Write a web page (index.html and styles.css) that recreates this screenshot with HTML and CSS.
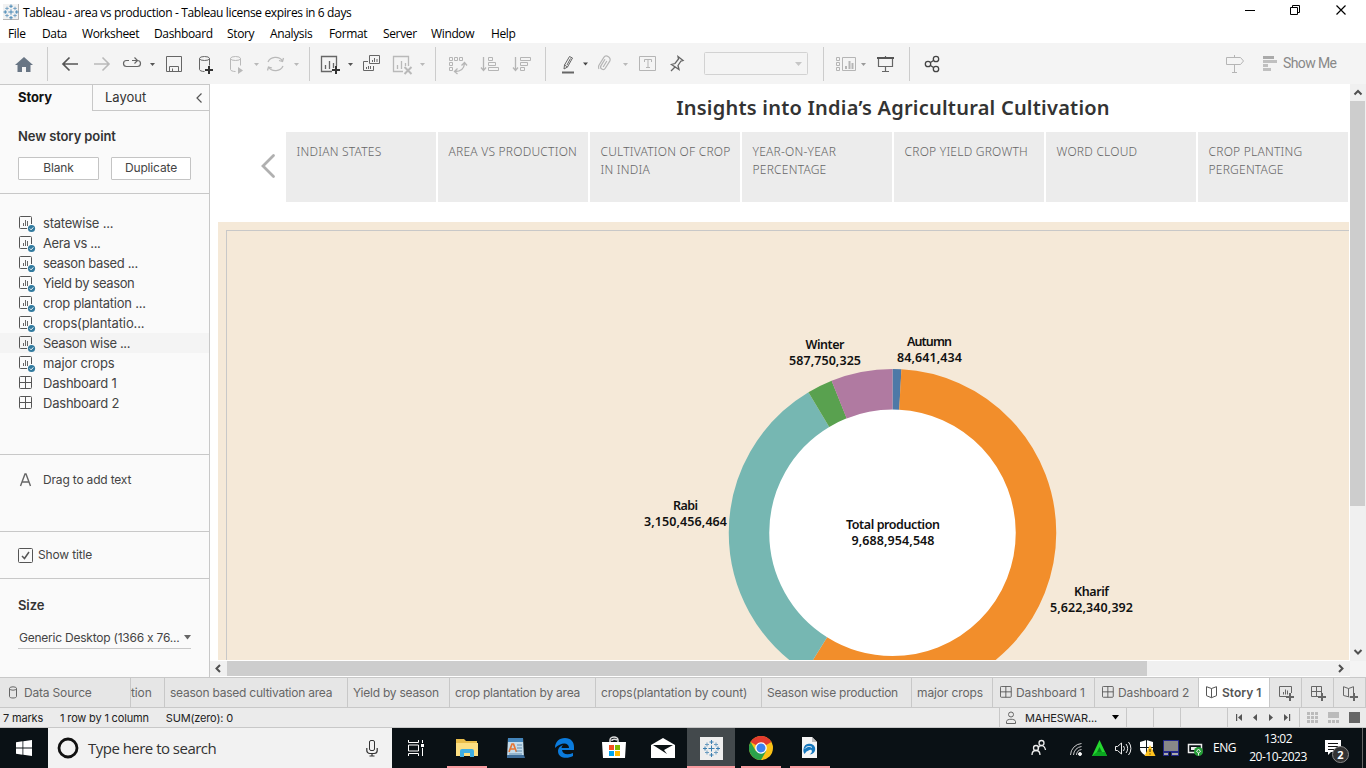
FILE: index.html
```html
<!DOCTYPE html>
<html lang="en">
<head>
<meta charset="utf-8">
<title>Tableau - area vs production</title>
<link rel="stylesheet" href="styles.css">
</head>
<body>
<svg class="defs" width="0" height="0">
  <defs>
    <g id="sheet" fill="none" stroke="#555">
      <path d="M12.500 8V1.500a1 1 0 0 0-1-1H1.500a1 1 0 0 0-1 1V11.500a1 1 0 0 0 1 1H8"/>
      <path d="M4.500 10V7M6.500 10V4M8.500 10V5" stroke="#666"/>
      <circle cx="12.500" cy="12.500" r="3.600" fill="#317a9e" stroke="none"/>
      <path d="M10.800 12.500l1.300 1.300 2.200-2.400" stroke="#fff"/>
    </g>
    <g id="dash" fill="none" stroke="#555">
      <rect x=".5" y=".5" width="12" height="12" rx="1"/><path d="M6.500 .5v12M.5 6.500h12"/>
    </g>
    <g id="book" fill="none" stroke="#555">
      <path d="M5.500 2.500L.5 .7v9l5 2 5-2v-9zM5.500 2.500v9.200"/>
    </g>
    <g id="caret"><path d="M0 0h5L2.500 3z"/></g>
    <g id="plus"><path d="M4 0v8M0 4h8" fill="none" stroke-width="2"/></g>
    <g id="logo" stroke="#3a7fb0" fill="none">
      <path d="M9 6v6M6 9h6"/>
      <path d="M9 .5v4M7 2.500h4M9 13.500v4M7 15.500h4M.5 9h4M2.500 7v4M13.500 9h4M15.500 7v4"/>
      <path d="M4.500 3v4M2.500 5h4M13.500 3v4M11.500 5h4M4.500 11v4M2.500 13h4M13.500 11v4M11.500 13h4" stroke="#6b9cc0"/>
    </g>
  </defs>
</svg>
<div class="window">
  <header class="titlebar">
    <svg class="app-icon" width="16" height="16" viewBox="0 0 18 18"><rect width="18" height="18" fill="#f2f2f2"/><path d="M17.500 0v17.500H0" fill="none" stroke="#aaa"/><use href="#logo"/></svg>
    <span class="app-title">Tableau - area vs production - Tableau license expires in 6 days</span>
    <svg class="win-controls" width="130" height="24" viewBox="1236 0 130 24" fill="none" stroke="#000">
      <path d="M1245 10.500h10"/><path d="M1290.500 7.500h7v7h-7zM1292.500 7.500v-2h7v7h-2"/><path d="M1336.500 5.500l9 9M1345.500 5.500l-9 9" stroke-width="1.200"/>
    </svg>
  </header>
  <nav class="menu"><span>File</span><span>Data</span><span>Worksheet</span><span>Dashboard</span><span>Story</span><span>Analysis</span><span>Format</span><span>Server</span><span>Window</span><span>Help</span></nav>

  <div class="toolbar">
    <svg class="tool-group" width="48" height="34" viewBox="0 47 48 34">
      <path d="M24 57l9 8h-2.500v7H26v-5h-4v5h-4.500v-7H15z" fill="#687584"/>
    </svg>
    <svg class="tool-group" width="262" height="34" viewBox="48 47 262 34" fill="none" stroke="#666">
      <path d="M78 64H63M69.500 57.500L63 64l6.500 6.500" stroke-width="1.700" stroke="#555"/>
      <path d="M94 64h15M102.500 57.500L109 64l-6.500 6.500" stroke-width="1.600" stroke="#b9b9b9"/>
      <path d="M129 60.500h-2.500a3 3 0 0 0 0 6h11a3 3 0 0 0 3-3c0-2-1-3-3-3H132M134.500 57.500l3 3-3 3" stroke-width="1.200"/>
      <use href="#caret" x="150" y="63" fill="#555" stroke="none"/>
      <path d="M166.500 56.500h15v15h-15zM169.500 71.500v-5h9v5M172.500 71v-2.500"/>
      <path d="M199.500 58.500v11c0 1 2 2 5 2M209.500 58.500v7"/><ellipse cx="204.500" cy="58.500" rx="5" ry="2"/>
      <use href="#plus" x="205" y="66" stroke="#333"/>
      <g stroke="#b9b9b9"><path d="M230.500 58.500v11c0 1 2 2 5 2M240.500 58.500v7"/><ellipse cx="235.500" cy="58.500" rx="5" ry="2"/><path d="M238 67l5 3.500-5 3.500z" fill="#b9b9b9" stroke="none"/>
      <path d="M268 62a8 7 0 0 1 14.500-1M283 66a8 7 0 0 1-14.500 1M283.500 58l-1 3.500-3.500-1M267.500 70.500l1-3.500 3.500 1" stroke-width="1.300"/></g>
      <g fill="#b9b9b9" stroke="none"><use href="#caret" x="254" y="63"/><use href="#caret" x="294" y="63"/></g>
    </svg>
    <svg class="tool-group" width="126" height="34" viewBox="310 47 126 34" fill="none" stroke="#666">
      <path d="M336.500 66v-9.500h-15v15H332M325.500 69v-4M329.500 69v-8M333.500 68v-5" stroke-width="1.300"/>
      <use href="#plus" x="332" y="66" stroke="#333"/>
      <use href="#caret" x="348" y="63" fill="#555" stroke="none"/>
      <path d="M369.500 55.500h10v8h-10zM372.500 62v-2M374.500 62v-4M377 62v-3M368 61.500h-4.500v9h10V66M366.500 69v-2M368.500 69v-3M370.500 69v-3"/>
      <g stroke="#b9b9b9"><path d="M408.500 66v-9.500h-15v15H403M397.500 69v-4M401.500 69v-8M405.500 66v-3" stroke-width="1.300"/><path d="M404.500 67l7 7M411.500 67l-7 7" stroke-width="2"/></g>
      <use href="#caret" x="420" y="63" fill="#b9b9b9" stroke="none"/>
    </svg>
    <svg class="tool-group" width="110" height="34" viewBox="436 47 110 34" fill="none" stroke="#b5b5b5">
      <path d="M449.500 57.500h3v3h-3zM454.500 57.500h3v3h-3zM459.500 57.500h3v3h-3zM449.500 62.500h3v3h-3zM449.500 67.500h3v3h-3z"/>
      <path d="M455 71.500c5 0 9-2 9.500-8M461.500 65.500l3-3 2.500 3M457.500 68.500l-3 3 3 2.500" stroke-width="1.300"/>
      <path d="M483.500 57v13M481 67.500l2.500 3 2.500-3" stroke-width="1.300"/><path d="M488.500 57.500h4v3h-4zM488.500 62.500h7v3h-7zM488.500 67.500h10v3h-10z"/>
      <path d="M515.500 57v13M513 67.500l2.500 3 2.500-3" stroke-width="1.300"/><path d="M520.500 57.500h10v3h-10zM520.500 62.500h7v3h-7zM520.500 67.500h4v3h-4z"/>
    </svg>
    <svg class="tool-group" width="278" height="34" viewBox="546 47 278 34" fill="none" stroke="#666">
      <path d="M569.500 56.500l3 1.500-5 9-3.500 2 .5-4zM570.500 58.500l-3.500 6.500M564.500 65l3 2"/><path d="M562 72.500h12" stroke-width="2"/>
      <use href="#caret" x="583" y="62.500" fill="#444" stroke="none"/>
      <g transform="rotate(32 605 64)"><path d="M602.500 60v7.500a2.500 2.500 0 0 0 5 0V59a3.500 3 0 0 0-7 0v9.500a4.500 4.500 0 0 0 2 3M605 60.500v7" stroke="#b5b5b5" stroke-width="1.200"/></g>
      <use href="#caret" x="623" y="63" fill="#b9b9b9" stroke="none"/>
      <path d="M639.500 56.500h16v14h-16zM644.500 62v-2.500h7V62M648 60v7.500M646 67.500h4" stroke="#b5b5b5"/>
      <path d="M678 56.500l5 4-2 .5-3 4.500 1 4-7.500-5 3.500-1 3.500-4.500zM675.500 66.500L671 71" stroke-width="1.300"/>
      <rect x="704.500" y="52.500" width="103" height="22" rx="1" stroke="#d2d2d2"/><path d="M795 62h7l-3.500 4z" fill="#c6c6c6" stroke="none"/>
    </svg>
    <svg class="tool-group" width="86" height="34" viewBox="824 47 86 34" fill="none" stroke="#b5b5b5">
      <path d="M836.500 57.500h3v3h-3zM836.500 62.500h3v3h-3zM836.500 67.500h3v3h-3zM842.500 57.500h13v13h-13z"/><path d="M846 69v-3M849.500 69v-8M852.500 69v-6" stroke-width="2"/>
      <use href="#caret" x="861" y="63" fill="#999" stroke="none"/>
      <path d="M877 58h17" stroke="#555" stroke-width="2"/><path d="M878.500 59v7.500h14V59M885.500 56v1M885.500 67v4M882 71.500h7" stroke="#666" stroke-width="1.200"/>
    </svg>
    <svg class="tool-group" width="456" height="34" viewBox="910 47 456 34" fill="none" stroke="#444">
      <g stroke-width="1.300"><circle cx="928" cy="64" r="2.700"/><circle cx="936" cy="59" r="2.700"/><circle cx="936" cy="69" r="2.700"/><path d="M930.500 62.500l3-2M930.500 65.500l3 2"/></g>
      <path d="M1226.500 57.500h14l3 3.500-3 3.500h-14zM1234.500 55v2M1234.500 65v7M1232 72.500h5" stroke="#b5b5b5"/>
      <path d="M1263 57.500h11" stroke="#aaa" stroke-width="3"/><path d="M1263 61.500h14M1263 65.500h5M1263 69.500h8" stroke="#c0c0c0" stroke-width="3"/>
      <text class="showme" x="1283" y="68" textLength="54">Show Me</text>
    </svg>
  </div>

  <main class="workspace">
    <aside class="sidebar">
      <div class="side-tabs"><b>Story</b><span class="layout-tab">Layout<svg width="8" height="12" viewBox="0 0 8 12"><path d="M6.500 1.500L2 6l4.500 4.500" fill="none" stroke="#555" stroke-width="1.200"/></svg></span></div>
      <section class="new-point">
        <h3>New story point</h3>
        <div class="buttons"><span class="btn">Blank</span><span class="btn">Duplicate</span></div>
      </section>
      <ul class="sheets">
        <li><svg width="17" height="17"><use href="#sheet"/></svg><span>statewise ...</span></li>
        <li><svg width="17" height="17"><use href="#sheet"/></svg><span class="wide">Aera vs ...</span></li>
        <li><svg width="17" height="17"><use href="#sheet"/></svg><span class="wide">season based ...</span></li>
        <li><svg width="17" height="17"><use href="#sheet"/></svg><span class="wide">Yield by season</span></li>
        <li><svg width="17" height="17"><use href="#sheet"/></svg><span>crop plantation ...</span></li>
        <li><svg width="17" height="17"><use href="#sheet"/></svg><span class="narrow">crops(plantatio...</span></li>
        <li class="hover"><svg width="17" height="17"><use href="#sheet"/></svg><span class="wide">Season wise ...</span></li>
        <li><svg width="17" height="17"><use href="#sheet"/></svg><span class="narrow">major crops</span></li>
        <li><svg width="17" height="17"><use href="#dash"/></svg><span>Dashboard 1</span></li>
        <li><svg width="17" height="17"><use href="#dash"/></svg><span>Dashboard 2</span></li>
      </ul>
      <div class="drag"><svg width="25" height="16" viewBox="0 0 25 16"><path d="M2.500 14L7 2h1l4.500 12M4.500 10h6" fill="none" stroke="#666" stroke-width="1.400"/></svg>Drag to add text</div>
      <div class="show-title"><svg width="15" height="15" viewBox="0 0 15 15" fill="none"><rect x=".5" y=".5" width="14" height="14" rx="1" stroke="#555"/><path d="M4 8l2.500 2.500L11 4" stroke="#555" stroke-width="1.500"/></svg><span>Show title</span></div>
      <div class="size"><h3>Size</h3><div class="select"><span>Generic Desktop (1366 x 76...</span><svg width="7" height="5"><path d="M0 0h7L3.500 4.500z" fill="#666"/></svg></div></div>
    </aside>

    <div class="view">
      <div class="canvas">
        <h1>Insights into India’s Agricultural Cultivation</h1>
        <div class="points">
          <svg class="prev" width="16" height="26" viewBox="0 0 16 26"><path d="M13.500 2.500L3 13l10.500 10.500" fill="none" stroke="#b0b0b0" stroke-width="2.800" stroke-linecap="round"/></svg>
          <div class="point">INDIAN STATES</div><div class="point">AREA VS PRODUCTION</div><div class="point">CULTIVATION OF CROP<br>IN INDIA</div><div class="point">YEAR-ON-YEAR<br>PERCENTAGE</div><div class="point">CROP YIELD GROWTH</div><div class="point">WORD CLOUD</div><div class="point">CROP PLANTING<br>PERGENTAGE</div>
        </div>
        <div class="dashboard">
          <div class="frame">
            <svg class="donut" width="1122" height="429" viewBox="227 231 1122 429">
              <circle cx="892.500" cy="532.800" r="124" fill="#fff"/>
              <g class="ring" transform="rotate(-90 892.500 532.800)">
                <circle class="autumn" cx="892.500" cy="532.800" r="143.500" pathLength="100"/>
                <circle class="kharif" cx="892.500" cy="532.800" r="143.500" pathLength="100"/>
                <circle class="rabi" cx="892.500" cy="532.800" r="143.500" pathLength="100"/>
                <circle class="summer" cx="892.500" cy="532.800" r="143.500" pathLength="100"/>
                <circle class="winter" cx="892.500" cy="532.800" r="143.500" pathLength="100"/>
              </g>
              <g class="labels">
                <text x="825" y="349" textLength="39">Winter</text><text x="825" y="365" textLength="72">587,750,325</text>
                <text x="929.500" y="346" textLength="45">Autumn</text><text x="929.500" y="362" textLength="65">84,641,434</text>
                <text x="685.500" y="510" textLength="25">Rabi</text><text x="685.500" y="526" textLength="83">3,150,456,464</text>
                <text x="893" y="529" textLength="94">Total production</text><text x="893" y="545" textLength="83">9,688,954,548</text>
                <text x="1091.500" y="596" textLength="35">Kharif</text><text x="1091.500" y="612" textLength="83">5,622,340,392</text>
              </g>
            </svg>
          </div>
        </div>
      </div>
      <div class="vscroll"><svg width="16" height="17"><path d="M4.500 10.500L8 7l3.500 3.500" fill="none" stroke="#505050" stroke-width="2"/></svg><i></i><svg width="16" height="17"><path d="M4.500 7L8 10.500 11.500 7" fill="none" stroke="#505050" stroke-width="2"/></svg></div>
      <div class="hscroll"><svg width="17" height="15"><path d="M10 4L6.500 7.500 10 11" fill="none" stroke="#505050" stroke-width="2"/></svg><i></i><svg width="17" height="15"><path d="M7 4l3.500 3.500L7 11" fill="none" stroke="#505050" stroke-width="2"/></svg></div>
      <div class="corner"></div>
    </div>
  </main>

  <div class="tabs">
    <div class="source"><svg width="15" height="13" fill="none" stroke="#666"><path d="M.5 2.500v8c0 2 7 2 7 0v-8"/><ellipse cx="4" cy="2.500" rx="3.500" ry="1.700"/></svg>Data Source</div>
    <div class="cut">tion</div><div class="tight">season based cultivation area</div><div class="tight">Yield by season</div><div class="tight">crop plantation by area</div><div>crops(plantation by count)</div><div class="tight">Season wise production</div><div>major crops</div>
    <div class="dash"><svg width="16" height="13"><use href="#dash" transform="scale(.9)"/></svg>Dashboard 1</div>
    <div class="dash"><svg width="16" height="13"><use href="#dash" transform="scale(.9)"/></svg>Dashboard 2</div>
    <div class="active"><svg width="16" height="13"><use href="#book"/></svg>Story 1</div>
    <div class="add"><svg width="16" height="16" fill="none" stroke="#666"><path d="M8 10.500H.5v-10h12V7M4.500 8.500V6M6.500 8.500v-5M8.500 8.500v-4"/><use href="#plus" x="7" y="7"/></svg></div>
    <div class="add"><svg width="16" height="16" fill="none" stroke="#666"><path d="M8 10.500H.5v-10h10V7M5.500 .5v10M.5 5.500h10"/><use href="#plus" x="7" y="7"/></svg></div>
    <div class="add"><svg width="16" height="16" fill="none" stroke="#666"><path d="M6.500 11L.5 9.500V.7l5 1.800 5-1.800V7M5.500 2.500v8.500"/><use href="#plus" x="7" y="7"/></svg></div>
  </div>

  <footer class="status">
    <div class="marks"><span>7 marks</span><span>1 row by 1 column</span><span>SUM(zero): 0</span></div>
    <div class="user"><svg width="10" height="14" fill="none" stroke="#666"><circle cx="5" cy="3.500" r="2.500"/><path d="M.5 12.500V10.500C.5 7.500 9.500 7.500 9.500 10.500v2z"/></svg><span>MAHESWAR...</span><svg width="7" height="5"><path d="M0 0h7L3.500 4.500z"/></svg></div>
    <div></div><div></div><div></div>
    <div class="pager"><svg width="71" height="19" viewBox="1228 708 71 19" fill="#555"><path d="M1236 714h1.200v7H1236zM1242 714v7l-4-3.500zM1257 714v7l-4-3.500zM1269 714v7l4-3.500zM1284 714v7l4-3.500zM1289 714h1.200v7H1289z"/></svg></div>
    <div class="modes"><svg width="66" height="19" viewBox="1300 708 66 19" fill="#bbb"><path d="M1307 712h3v3h-3zM1311 712h3v3h-3zM1315 712h3v3h-3zM1307 716h3v3h-3zM1311 716h3v3h-3zM1315 716h3v3h-3zM1307 720h3v3h-3zM1311 720h3v3h-3zM1315 720h3v3h-3zM1328 712h11v6h-11zM1328 720h3v3h-3zM1332 720h3v3h-3zM1336 720h3v3h-3z"/><path d="M1349 712h11v11h-11z" fill="#666"/></svg></div>
  </footer>

  <div class="taskbar">
    <div class="start"><svg width="16" height="16" fill="#fff"><path d="M0 2.300L6.500 1.300V7.500H0zM7.300 1.200L16 0v7.500H7.300zM0 8.400h6.500v6.300L0 13.700zM7.300 8.400H16V16l-8.700-1.200z"/></svg></div>
    <div class="search"><svg width="22" height="22"><circle cx="11" cy="11" r="9" fill="none" stroke="#111" stroke-width="2.800"/></svg><span>Type here to search</span><svg width="12" height="17" fill="none" stroke="#333"><rect x="3.500" y=".5" width="5" height="10" rx="1.500"/><path d="M.8 8v2.500a3 3 0 0 0 3 3h4.400a3 3 0 0 0 3-3V8M6 13.500V16M3.500 16h5" stroke-width="1.200"/></svg></div>
    <div class="apps">
      <div class="app task-view"><svg width="18" height="16" fill="none" stroke="#fff"><path d="M1.500 0v2.500h10V0M1.500 16v-2.500h10V16M1.500 5h10v6h-10zM15.500 0v3M15.500 8v8"/><path d="M14 4h3v3h-3z" fill="#fff" stroke="none"/></svg></div>
      <div class="app open"><svg width="22" height="20"><path d="M0 1h8l2 2h11v15H0z" fill="#e9bd4b"/><path d="M0 5h22v13H0z" fill="#fddf82"/><path d="M4 19v-6q0-2 2-2h10q2 0 2 2v6h-4v-4H8v4z" fill="#3faee3"/></svg></div>
      <div class="app"><svg width="20" height="22"><path d="M2 1h15l1 20H1z" fill="#c4dceb"/><path d="M2 1h15v4H2z" fill="#4485bb"/><path d="M1 18h17l1 3H1z" fill="#3d6c98"/><path d="M3 15l3-8h1.500l3 8M4.500 12h4" fill="none" stroke="#e67635" stroke-width="1.700"/><path d="M11 8h5M11 11h5M10 14h6M3 17h13" stroke="#618caf"/></svg></div>
      <div class="app"><svg width="22" height="22"><path d="M1 11C1 5 5 1 11 1s9 4 9 9v3H8c1 5 6 5 11 3v3c-5 3-15 3-15-5 0-3 2-5 5-6-1 1-1.500 2-1.500 3H15c0-6-8-6-14 0z" fill="#0b7bdc"/></svg></div>
      <div class="app"><svg width="24" height="24"><path d="M8 6V4a4 3 0 0 1 8 0v2M10 5V4a4 3 0 0 1 5 0" fill="none" stroke="#ddd" stroke-width="1.500"/><path d="M0 6h24l-1 16H1z" fill="#fff"/><path d="M7 9h5v5H7z" fill="#f25022"/><path d="M13 9h5v5h-5z" fill="#7fba00"/><path d="M7 15h5v5H7z" fill="#00a4ef"/><path d="M13 15h5v5h-5z" fill="#ffb900"/></svg></div>
      <div class="app"><svg width="24" height="20"><path d="M0 7L12 0l12 7v13H0z" fill="#fff"/><path d="M2 7h20l-9 5 3 4z" fill="#0b1215"/></svg></div>
      <div class="app open current"><svg width="23" height="23" viewBox="0 0 23 23"><rect width="23" height="23" fill="#eee"/><use href="#logo" x="2.500" y="2.500"/></svg></div>
      <div class="app open"><svg width="24" height="24"><circle cx="12" cy="12" r="12" fill="#fbc116"/><path d="M12 12L1.600 6A12 12 0 0 1 22.400 6z" fill="#e33b2e"/><path d="M1.600 6A12 12 0 0 0 12 24l5.200-9L12 12 6.800 15z" fill="#2ba14b"/><circle cx="12" cy="12" r="5.800" fill="#fff"/><circle cx="12" cy="12" r="4.500" fill="#3c82f0"/></svg></div>
      <div class="app open"><svg width="17" height="22"><path d="M1 0h10l5 5v16H1z" fill="#f5f5f5"/><path d="M11 0v5h5z" fill="#bbb"/><path d="M2.500 12a6 6 0 0 1 11.500-1.500c1 4-2 7-5.500 7 2-1 3-3 2-4.500-2-1-3 1-5 1.500L3.500 17c-1-1.500-1.300-3-1-5z" fill="#1678be"/><path d="M4 11.500c2-2.500 5-2.500 7-1" fill="none" stroke="#fff"/></svg></div>
    </div>
    <svg class="tray" width="190" height="40" viewBox="1022 728 190 40" fill="none" stroke="#eee">
      <g stroke-width="1.300"><circle cx="1041.500" cy="743" r="2.500"/><path d="M1038 748.500c1-4 6.500-4 7.500 1.500"/><circle cx="1036" cy="748" r="2.500"/><path d="M1032 755c0-6 8-6 8 0"/></g>
      <path d="M1070.500 755a12 12 0 0 1 11-11.500M1073.500 755a9 9 0 0 1 8-8.500M1076.500 755a6 6 0 0 1 5-5.500" stroke="#ccc"/><circle cx="1080" cy="754" r="1.500" fill="#fff"/>
      <path d="M1099.500 740l7.500 16h-15z" fill="#25d92f" stroke="none"/><path d="M1092 756h15l-2-4h-8z" fill="#0ba520" stroke="none"/><path d="M1099.500 747l2.500 5h-5z" fill="#07821a" stroke="none"/>
      <path d="M1115.500 746.500h2l4-3.500v11l-4-3.500h-2zM1123.500 746a4 4 0 0 1 0 5M1126 744a7 7 0 0 1 0 9M1128.500 742a10 10 0 0 1 0 13"/>
      <path d="M1140 742l6.500-2 6.500 2v6c0 4-3 6-6.500 8-3.500-2-6.500-4-6.500-8z" fill="#fff" stroke="none"/><path d="M1146.500 740v16M1140 747.500h13" stroke="#10171b"/><path d="M1150 745l5.500 11h-11z" fill="#ffc21d" stroke="none"/><path d="M1150 749v3M1150 753.500v1" stroke="#222"/>
      <path d="M1163.500 740.500h15v11h-15z" fill="#888" stroke="#22278a"/><path d="M1163.500 752.500h5v3h-5zM1171.500 752.500h7v3h-7z" fill="#aaa" stroke="#22278a"/>
      <path d="M1188.500 744.500h13v8h-13z" stroke-width="1.500"/><path d="M1191 747h6v3h-6z" fill="#eee" stroke="none"/><circle cx="1198.500" cy="751.500" r="4.500" fill="#259e37" stroke="none"/><path d="M1198.500 749l2 2.500-2 1.500-2-1.500zM1198.500 753v2.500"/>
    </svg>
    <span class="lang">ENG</span>
    <div class="clock"><span>13:02</span><span>20-10-2023</span></div>
    <div class="notice"><svg width="17" height="17"><path d="M0 0h16v12H6l-3 3v-3H0z" fill="#fff"/><path d="M3 3.500h10M3 6.500h10M3 9.500h7" stroke="#111"/></svg><b>2</b></div>
    <div class="peek"></div>
  </div>
</div>
</body>
</html>
```
FILE: styles.css
```css
* { box-sizing: border-box; }
body { margin: 0; overflow: hidden; background: #fff; font-family: Inter, Roboto, "Liberation Sans", sans-serif; color: #444; }
svg { display: block; flex: none; }
.defs { position: absolute; }
h1, h3, ul { margin: 0; padding: 0; }
.window { width: 1366px; height: 768px; display: flex; flex-direction: column; white-space: nowrap; }

.titlebar { height: 24px; display: flex; align-items: center; padding-left: 3px; font: 12px "Open Sans", sans-serif; color: #000; }
.app-icon { margin-right: 4px; }
.app-title { letter-spacing: -.36px; }
.win-controls { margin-left: auto; }
.menu { height: 19px; padding-left: 8px; display: grid; grid-template-columns: 34px 40px 72px 73px 43px 59px 54px 48px 60px 60px; font: 12px/19px "Open Sans", sans-serif; letter-spacing: -.36px; color: #000; }

.toolbar { height: 41px; background: #f4f4f4; display: flex; align-items: center; }
.tool-group { background: linear-gradient(#ccc, #ccc) 100% 0 / 1px 100% no-repeat; }
.tool-group:last-child { background: none; }
.showme { font: 14px Roboto, sans-serif; fill: #888; stroke: none; }

.workspace { height: 593px; display: flex; }
.sidebar { width: 210px; background: #fafafa; border-right: 1px solid #c8c8c8; border-top: 1px solid #c8c8c8; font-size: 12px; }
.side-tabs { display: flex; height: 26px; font-size: 13px; line-height: 25px; color: #333; }
.side-tabs b { width: 92px; padding-left: 18px; color: #111; letter-spacing: -.1px; }
.layout-tab { flex: 1; display: flex; align-items: center; justify-content: space-between; padding: 0 6px 0 12px; border-left: 1px solid #c8c8c8; border-bottom: 1px solid #c8c8c8; }
h3 { font-size: 13px; font-weight: 600; line-height: 18px; color: #333; letter-spacing: -.1px; }
.new-point { height: 83px; padding: 16px 18px 0; border-bottom: 1px solid #c8c8c8; }
.buttons { display: flex; gap: 12px; margin-top: 12px; }
.btn { width: 81px; height: 23px; line-height: 19px; text-align: center; letter-spacing: -.15px; background: #fff; border: 1px solid #c4c4c4; border-radius: 1px; }
.btn + .btn { width: 80px; }
.sheets { height: 261px; padding-top: 19px; list-style: none; border-bottom: 1px solid #c8c8c8; font-size: 13px; letter-spacing: -.22px; }
.sheets .wide { letter-spacing: -.36px; }
.sheets .narrow { letter-spacing: -.12px; }
.sheets li { height: 20px; display: flex; align-items: center; padding-left: 19px; gap: 7px; line-height: 20px; }
.sheets svg { margin-top: 3px; }
.hover { background: #f4f4f4; }
.drag { height: 77px; padding: 17px 0 0 18px; display: flex; line-height: 16px; letter-spacing: -.18px; border-bottom: 1px solid #c8c8c8; }
.show-title { height: 47px; padding-left: 18px; display: flex; align-items: center; gap: 5px; letter-spacing: -.15px; border-bottom: 1px solid #c8c8c8; }
.show-title span { padding-bottom: 2px; }
.size { padding: 17px 18px 0; }
.select { height: 26px; margin-top: 9px; padding: 3px 0 0 1px; display: flex; align-items: center; justify-content: space-between; border-bottom: 1px solid #c8c8c8; letter-spacing: -.23px; }

.view { width: 1156px; display: grid; grid-template: 577px 16px / 1140px 16px; }
.canvas { overflow: hidden; padding-left: 8px; display: flex; flex-direction: column; border-right: 1px solid #fff; border-bottom: 1px solid #fff; }
h1 { width: 1350px; height: 48px; text-align: center; font: 600 20px/47px "Noto Sans", sans-serif; letter-spacing: .22px; color: #333; }
.points { height: 70px; margin: 0 0 20px 42px; display: flex; gap: 2px; }
.prev { margin: 21px 8px 0 0; }
.point { flex: none; width: 150px; background: #ececec; padding: 11px 0 0 10.500px; font: 300 12px/18px "Noto Sans", sans-serif; letter-spacing: .23px; color: #666; }
.dashboard { height: 438px; background: #f5e9d8; padding: 8px 0 0 8px; }
.frame { height: 430px; border: solid #c8c8c8; border-width: 1px 0 0 1px; }
.ring circle { fill: none; stroke-width: 40.500; }
.ring .autumn { stroke: #4e79a7; stroke-dasharray: .88 99.12; }
.ring .kharif { stroke: #f28e2b; stroke-dasharray: 58.03 41.97; stroke-dashoffset: -.87; }
.ring .rabi { stroke: #76b7b2; stroke-dasharray: 32.52 67.48; stroke-dashoffset: -58.9; }
.ring .summer { stroke: #59a14f; stroke-dasharray: 2.52 97.48; stroke-dashoffset: -91.42; }
.ring .winter { stroke: #b07aa1; stroke-dasharray: 6.07 93.93; stroke-dashoffset: -93.93; }
.labels { font: 600 12.500px "Noto Sans", sans-serif; fill: #111; text-anchor: middle; }
.vscroll { background: #f0f0f0; display: flex; flex-direction: column; }
.vscroll i { width: 15px; height: 405px; margin-bottom: 137px; background: #cdcdcd; }
.hscroll { background: #f0f0f0; height: 15px; display: flex; }
.hscroll i { width: 920px; margin-right: 185px; background: #cdcdcd; }
.corner { height: 16px; background: #f4f4f4; }

.tabs { height: 31px; display: grid; grid-template-columns: 131px 34px 183px 102px 146px 166px 150px 81px 102px 104px 71px 32px 32px 32px; background: #e6e6e6; border: solid #c8c8c8; border-width: 1px 0; font-size: 12px; letter-spacing: -.12px; color: #666; }
.tabs > div { display: flex; align-items: center; overflow: hidden; border-right: 1px solid #c8c8c8; padding-left: 5px; }
.tabs .tight { letter-spacing: -.24px; }
.tabs .source { padding-left: 9px; letter-spacing: -.18px; }
.tabs .cut { padding-left: 0; }
.tabs .dash { padding-left: 7px; }
.tabs .active { background: #fff; font-weight: 600; padding-left: 7px; color: #555; letter-spacing: 0; }
.tabs .add { padding: 2px 0 0 9px; }

.status { height: 20px; display: grid; grid-template-columns: 1000px 127px 27px 27px 47px 72px 66px; background: #ebebeb; border-bottom: 1px solid #c8c8c8; font-size: 11px; letter-spacing: -.17px; color: #222; }
.status > div { display: flex; align-items: center; border-right: 1px solid #c8c8c8; }
.status > .modes { border: 0; }
.marks { padding-left: 3px; gap: 17px; }
.user { padding-left: 6px; gap: 9px; }
.user span { width: 78px; }

.taskbar { height: 40px; background: #0a1115; display: flex; color: #fff; font-family: "Open Sans", sans-serif; }
.start { width: 48px; display: grid; place-items: center; }
.search { width: 344px; padding: 0 14px 0 9px; background: #f2f2f2; color: #333; display: flex; align-items: center; font-size: 15px; }
.search span { flex: 1; margin-left: 9px; letter-spacing: -.52px; }
.apps { display: flex; margin-left: 1px; }
.app { width: 49px; height: 40px; display: grid; place-items: center; }
.task-view { padding-right: 3px; }
.open { background: linear-gradient(#f99ba0, #f99ba0) 50% 100% / 40px 2px no-repeat; }
.current { width: 48px; margin-right: 1px; background: linear-gradient(#f99ba0, #f99ba0) 50% 100% / 48px 2px no-repeat #43494c; }
.tray { margin-left: auto; }
.lang { width: 34px; font-size: 12px; line-height: 39px; letter-spacing: -.5px; padding-left: 1px; }
.clock { width: 64px; display: flex; flex-direction: column; align-items: center; font-size: 12px; line-height: 18px; padding-top: 2px; letter-spacing: -.5px; }
.notice { position: relative; width: 52px; padding: 12px 0 0 15px; }
.notice b { position: absolute; left: 22px; top: 18px; width: 17px; height: 17px; border: 1px solid #888; border-radius: 50%; background: #333; font-size: 11px; line-height: 15px; text-align: center; }
.peek { width: 4px; border-left: 1px solid #666; }
```
